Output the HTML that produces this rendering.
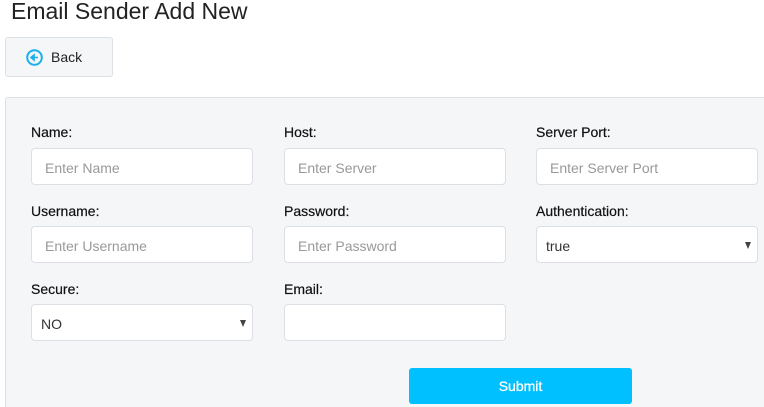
<!DOCTYPE html>
<html style="width:764px;height:407px;overflow:hidden"><head><style>
*{box-sizing:border-box;margin:0;padding:0}
body{width:764px;height:407px;overflow:hidden;background:#fff;font-family:"Liberation Sans",sans-serif;position:relative}
.t{position:absolute;left:11px;top:-2px;font-size:23px;color:#222}
.back{position:absolute;left:5px;top:37px;width:108px;height:40px;border:1px solid #dde0e4;border-radius:3px;background:#f5f6f8;font-size:14px;color:#222}
.back span{position:absolute;left:45px;top:11px}
.back svg{position:absolute;left:20px;top:11px}
.panel{position:absolute;left:5px;top:97px;width:780px;height:330px;border:1px solid #dde0e4;border-radius:3px;background:#f5f6f8}
.l{position:absolute;font-size:14px;color:#111;-webkit-text-stroke:0.2px #111}
.i{position:absolute;width:222px;height:37px;background:#fff;border:1px solid #dcdfe3;border-radius:4px;font-size:14px;color:#999;padding:11px 13px}
.s{color:#333;padding-left:9px}
.s:after{content:"";position:absolute;right:6px;top:15px;border-left:3.5px solid transparent;border-right:3.5px solid transparent;border-top:7px solid #444}
.sub{position:absolute;left:409px;top:368px;width:223px;height:36px;background:#00c0ff;border-radius:3px;color:#fff;font-size:14px;text-align:center;line-height:36px;-webkit-text-stroke:0.3px #fff}
</style></head><body>
<div class="t">Email Sender Add New</div>
<div class="back"><svg width="17" height="17" viewBox="0 0 17 17"><circle cx="8.5" cy="8.5" r="7.3" fill="none" stroke="#1ab0ee" stroke-width="2"/><path d="M5 8.5h7M5 8.5l3-2.5v5z" stroke="#1ab0ee" stroke-width="1.6" fill="#1ab0ee"/></svg><span>Back</span></div>
<div class="panel"></div>
<div class="l" style="left:31px;top:124px">Name:</div>
<div class="l" style="left:284px;top:124px">Host:</div>
<div class="l" style="left:536px;top:124px">Server Port:</div>
<div class="i" style="left:31px;top:148px">Enter Name</div>
<div class="i" style="left:284px;top:148px">Enter Server</div>
<div class="i" style="left:536px;top:148px">Enter Server Port</div>
<div class="l" style="left:31px;top:203px">Username:</div>
<div class="l" style="left:284px;top:203px">Password:</div>
<div class="l" style="left:536px;top:203px">Authentication:</div>
<div class="i" style="left:31px;top:226px">Enter Username</div>
<div class="i" style="left:284px;top:226px">Enter Password</div>
<div class="i s" style="left:536px;top:226px">true</div>
<div class="l" style="left:31px;top:281px">Secure:</div>
<div class="l" style="left:284px;top:281px">Email:</div>
<div class="i s" style="left:31px;top:304px">NO</div>
<div class="i" style="left:284px;top:304px"></div>
<div class="sub">Submit</div>
</body></html>
